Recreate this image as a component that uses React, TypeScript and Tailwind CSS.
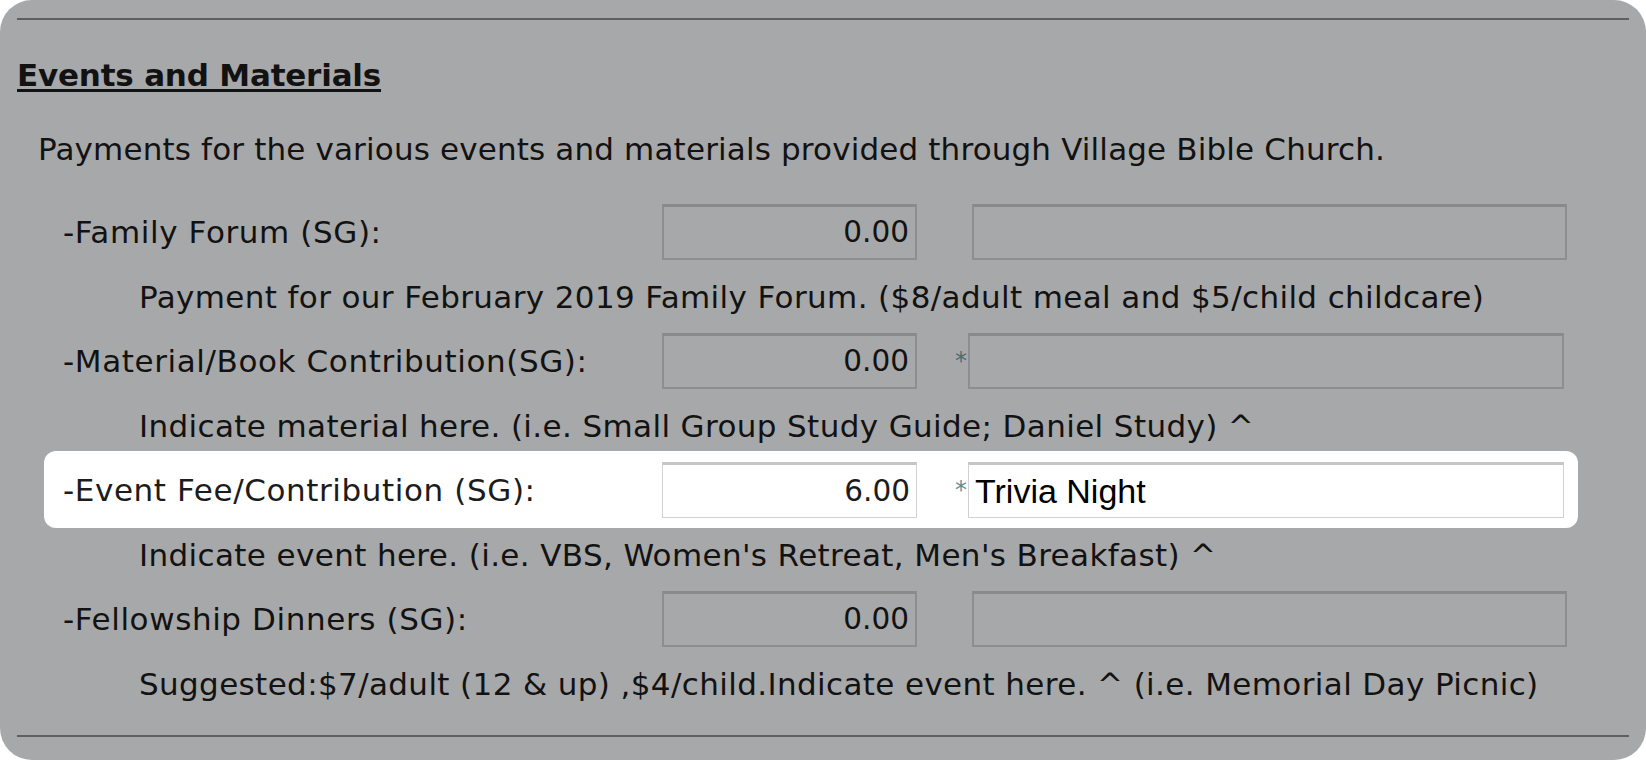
import React from 'react'
import clsx from 'clsx'

type PaymentRow = {
  label: string
  amount: string
  note: string
  required: boolean
  detail: string
  active: boolean
}

// rows of the events form, the active one is the one being filled in
const paymentRows: PaymentRow[] = [
  {
    label: '-Family Forum (SG):',
    amount: '0.00',
    note: 'Payment for our February 2019 Family Forum. ($8/adult meal and $5/child childcare)',
    required: false,
    detail: '',
    active: false
  },
  {
    label: '-Material/Book Contribution(SG):',
    amount: '0.00',
    note: 'Indicate material here. (i.e. Small Group Study Guide; Daniel Study) ^',
    required: true,
    detail: '',
    active: false
  },
  {
    label: '-Event Fee/Contribution (SG):',
    amount: '6.00',
    note: "Indicate event here. (i.e. VBS, Women's Retreat, Men's Breakfast) ^",
    required: true,
    detail: 'Trivia Night',
    active: true
  },
  {
    label: '-Fellowship Dinners (SG):',
    amount: '0.00',
    note: 'Suggested:$7/adult (12 & up) ,$4/child.Indicate event here. ^ (i.e. Memorial Day Picnic)',
    required: false,
    detail: '',
    active: false
  }
]

function RowGroup({ row }: { row: PaymentRow }) {
  const boxClass = row.active
    ? 'border border-[#d2d2d2] border-t-[3px] border-t-[#c6c6c6] bg-white'
    : 'border-2 border-[#8d8e90] border-t-[3px] border-t-[#888a8c] bg-[#a7a8aa]'

  return (
    <div>
      <div
        className={clsx(
          'ml-[27px] flex h-[77px] w-[1534px] items-center rounded-[12px] pl-[19px]',
          row.active && 'bg-white text-[#1c1c1c]'
        )}
      >
        <span className="w-[599px] shrink-0 tracking-[0.6px]">{row.label}</span>
        <div
          className={clsx(
            'flex h-[56px] w-[255px] shrink-0 items-center justify-end pr-[6px] text-[29.5px]',
            boxClass
          )}
        >
          {row.amount}
        </div>
        <div
          className={clsx(
            'flex h-[56px] shrink-0 justify-end pr-[1px] pt-[16px] text-[24px] leading-[24px]',
            row.required ? 'w-[51px]' : 'w-[55px]',
            row.active ? 'text-[#5f8d93]' : 'text-[#4d6b70]'
          )}
        >
          {row.required ? '*' : ''}
        </div>
        <div
          className={clsx(
            "flex h-[56px] shrink-0 items-center pl-[6px] font-['Liberation_Sans',Arial,sans-serif] text-[34px] text-black",
            row.required ? 'w-[596px]' : 'w-[595px]',
            boxClass
          )}
        >
          {row.detail}
        </div>
      </div>
      <div className="flex h-[52px] items-center pl-[122px] pt-[2px] tracking-[0.37px]">{row.note}</div>
    </div>
  )
}

export default function App() {
  return (
    <div className="bg-white">
      <div className="h-[760px] overflow-hidden rounded-[32px] bg-[#a7a8aa] px-[17px] pt-[18px] font-['DejaVu_Sans',Verdana,sans-serif] text-[31px] leading-[36px] text-[#121212]">
        <div className="h-[2px] bg-[#5e5f61]" />
        <h2 className="mt-[37px] text-[31px] font-bold tracking-[-0.2px] underline decoration-[3px] underline-offset-[3px]">
          Events and Materials
        </h2>
        <p className="mt-[38px] pl-[21px] tracking-[0.15px]">
          Payments for the various events and materials provided through Village Bible Church.
        </p>
        <div className="mt-[26px]">
          {paymentRows.map(row => (
            <RowGroup key={row.label} row={row} />
          ))}
        </div>
        <div className="mt-[26px] h-[2px] bg-[#5e5f61]" />
      </div>
    </div>
  )
}
